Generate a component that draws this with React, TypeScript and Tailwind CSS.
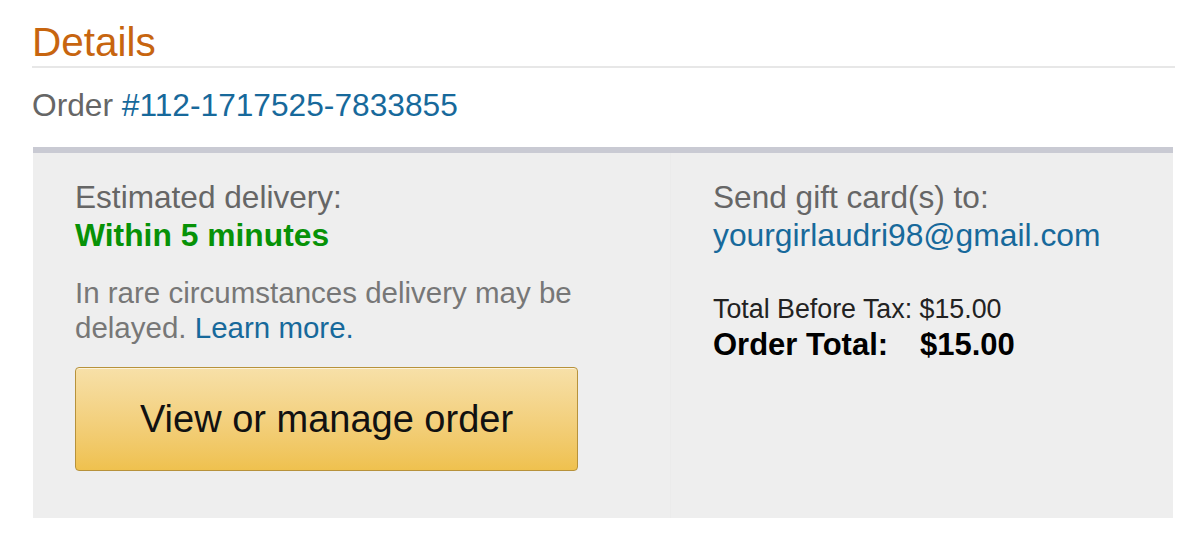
export default function App() {
  return (
    <div className="min-h-screen bg-white pl-[32px] pr-[25px] font-['Liberation_Sans',Arial,sans-serif]">
      {/* Heading */}
      <h1 className="pt-[18px] text-[40.5px] leading-[48px] text-[#c7650f] border-b-2 border-[#e7e7e7]">
        Details
      </h1>

      <p className="mt-[19px] text-[31.7px] leading-[36px] text-[#666]">
        Order <a className="text-[#17699b]">#112-1717525-7833855</a>
      </p>

      {/* Order summary box */}
      <div className="mt-[24px] ml-px w-[1140px] flex bg-[#eeeeee] border-t-[6px] border-[#c9cad3]">
        <div className="w-[637px] pl-[42px] pt-[25px] pb-[47px]">
          <div className="text-[31.6px] leading-[38px] text-[#666]">Estimated delivery:</div>
          <div className="text-[31.8px] leading-[38px] font-bold text-[#079207]">Within 5 minutes</div>
          <p className="mt-[21px] text-[29.5px] leading-[35px] text-[#777]">
            In rare circumstances delivery may be
            <br />
            delayed. <a className="text-[#17699b]">Learn more.</a>
          </p>
          <button className="mt-[22px] w-[503px] h-[104px] flex items-center justify-center rounded-[4px] border border-[#b7923b] bg-gradient-to-b from-[#f7e0a8] to-[#efc14e] shadow-[0_1px_0_rgba(255,255,255,0.6)_inset] text-[38px] text-[#111]">
            View or manage order
          </button>
        </div>
        <div className="flex-1 pl-[42px] pt-[25px] border-l border-[#ebebeb]">
          <div className="text-[31.6px] leading-[38px] text-[#666]">Send gift card(s) to:</div>
          <div className="text-[31.8px] leading-[38px] text-[#17699b]">yourgirlaudri98@gmail.com</div>
          <div className="mt-[39px] text-[26.8px] leading-[32px] text-[#222]">Total Before Tax: $15.00</div>
          <div className="mt-[2px] flex text-[31px] leading-[36px] font-bold text-black">
            <span className="w-[207px]">Order Total:</span>
            <span>$15.00</span>
          </div>
        </div>
      </div>
    </div>
  );
}
